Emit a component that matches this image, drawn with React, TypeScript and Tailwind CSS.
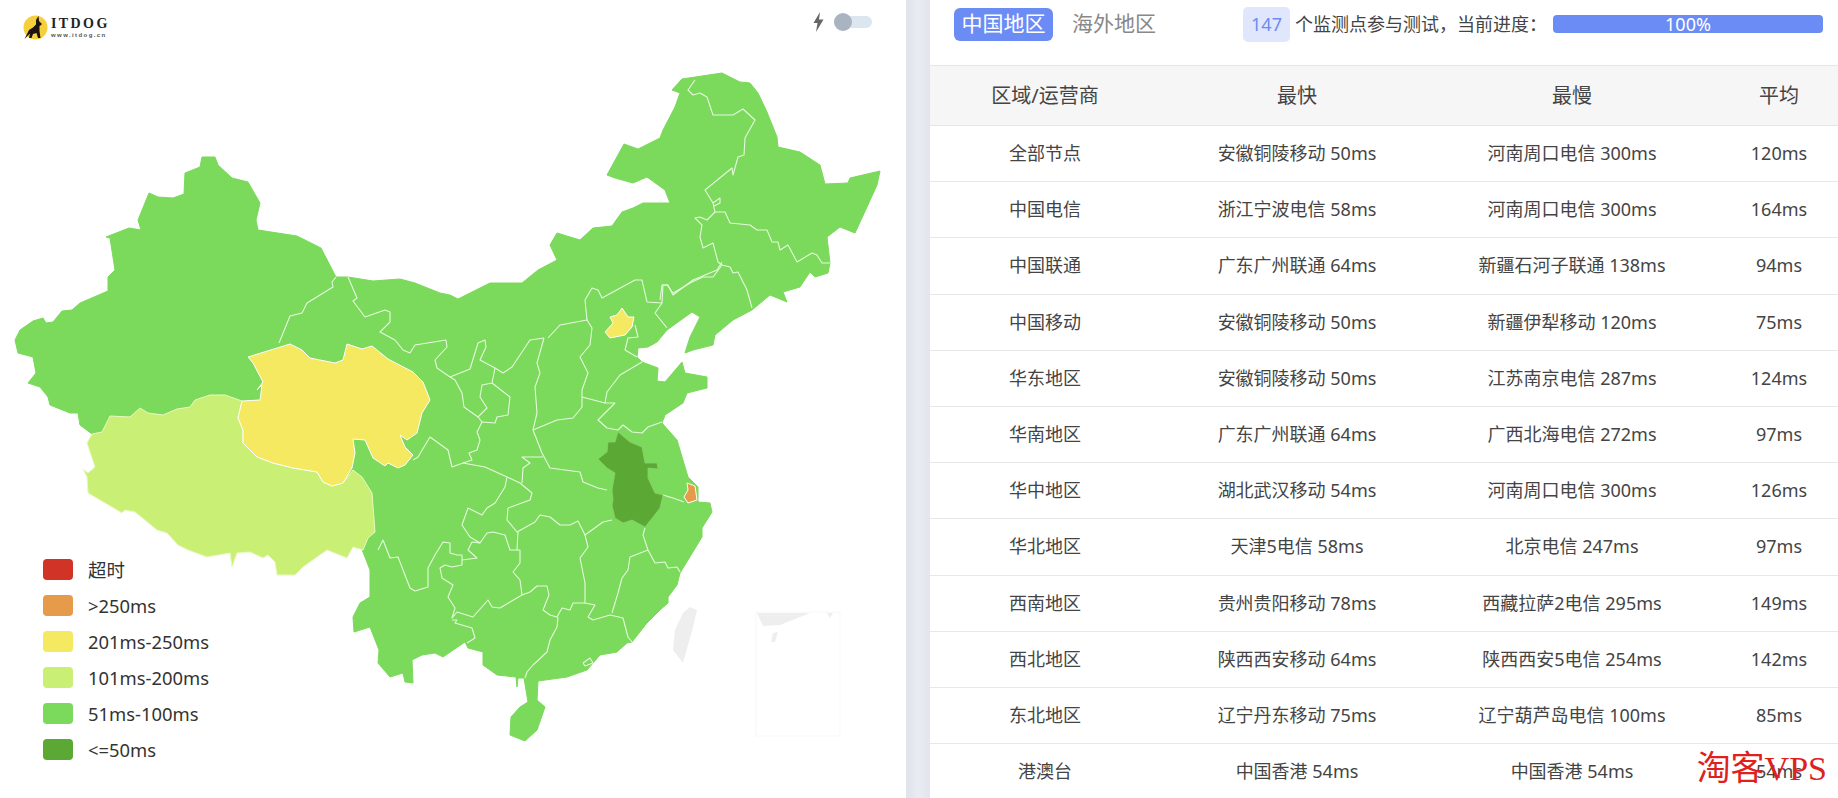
import React from 'react';

const GREEN = '#7bd95b';

// Map outlines, traced in page pixels
const OUTLINE =
  '15,340 20,330 33,321 43,318 46,323 53,322 62,311 72,310 80,303 108,291 108,277 115,270 110,238 106,237 129,228 141,230 138,220 149,193 158,197 173,198 184,194 185,173 200,167 202,157 215,157 218,165 232,178 248,182 260,203 256,220 258,230 297,236 321,248 336,277 348,277 373,281 400,279 415,283 440,293 450,295 458,299 490,283 522,283 538,270 557,260 550,245 557,233 580,240 593,228 612,226 622,212 633,208 643,203 670,203 665,190 647,177 633,183 615,178 607,175 624,144 638,149 660,138 663,130 675,107 680,93 672,90 682,79 722,73 740,82 750,83 758,93 767,112 777,137 778,147 800,152 820,165 825,184 848,183 850,178 880,171 877,185 867,207 855,233 840,227 827,237 830,263 828,273 815,277 810,272 800,287 783,292 787,302 770,295 752,310 733,320 715,335 713,345 693,350 685,353 690,337 700,317 692,312 667,330 657,342 648,347 638,348 637,357 642,362 658,368 657,381 665,382 682,362 685,373 707,377 707,388 687,393 683,403 665,415 662,423 677,440 688,477 698,487 698,502 710,503 712,512 702,528 702,537 688,560 680,573 677,585 668,597 668,603 660,610 647,623 632,642 627,643 617,652 600,655 587,670 567,677 538,681 537,700 545,707 537,730 525,741 510,735 511,717 520,707 528,702 524,678 518,678 517,687 516,677 497,675 483,665 483,652 468,648 465,642 443,657 435,653 422,655 412,660 413,683 405,682 403,673 390,677 378,663 379,650 370,627 354,632 353,617 360,603 370,597 370,570 363,552 340,500 300,450 200,420 92,434 80,425 78,413 70,413 50,405 48,397 40,387 28,383 36,373 33,357 18,353';

const TIBET =
  '92,434 102,432 110,416 130,417 140,408 148,413 163,415 177,409 190,407 195,400 210,395 225,395 242,401 238,418 243,430 243,443 257,457 273,463 293,468 317,472 323,482 332,486 343,483 353,470 362,477 372,493 375,532 368,538 363,550 353,547 347,558 327,550 303,567 295,575 277,575 275,562 268,555 263,558 250,552 237,553 232,567 230,553 207,557 188,550 178,545 167,533 157,530 135,512 125,510 122,513 88,493 87,477 83,469 88,473 95,467 87,443';

const QINGHAI =
  '248,357 290,344 302,350 310,358 335,363 343,360 347,344 362,349 372,346 388,359 413,372 423,382 430,400 422,413 417,433 407,440 400,435 405,447 413,455 405,465 398,468 388,463 385,466 373,458 365,440 353,439 355,453 352,468 343,483 332,486 323,482 317,472 293,468 273,463 257,457 243,443 243,430 238,418 242,401 260,400 262,385 257,390 263,382 253,363';

const ANHUI =
  '618,432 630,442 642,447 645,463 657,463 658,469 648,468 648,478 655,493 663,495 660,508 653,517 645,527 632,520 623,523 615,518 612,505 613,500 612,490 615,473 607,468 598,459 607,452 608,442 615,442';

const SHANGHAI = '687,483 695,486 697,500 688,503 684,497 688,490';
const BEIJING = '622,308 628,317 634,317 632,327 625,335 610,338 605,332 613,323 610,317 617,315';

// Province borders
const BORDERS = [
  '336,277 332,282 333,287 320,295 307,303 302,313 290,316 279,343',
  '348,277 357,298 353,301 365,317 385,310 390,312 390,322 380,332 395,340 403,350 410,353 415,345 446,340 447,347 435,360 437,368 450,377 470,369 478,343 485,340 486,347 480,360 495,368 503,373 512,367 530,340 544,338',
  '450,377 455,380 462,393 464,407 478,417 482,422 477,432 480,440 477,450 469,453 472,460 463,463 452,467 448,450 430,437 418,457 413,460',
  '495,368 492,383 482,385 480,397 487,408 478,417',
  '492,383 510,397 508,415 497,417 495,423 482,422',
  '544,338 537,363 540,373 535,387 537,413 533,430 557,420 573,418 582,407 582,390 588,373 580,357 590,345 592,328 587,320 560,325 548,338',
  '587,320 585,300 592,288 598,290 602,298 635,280 642,280 647,302 662,303 655,313 667,328',
  '662,303 663,285 668,285 673,295 693,280 717,270 722,262',
  '722,265 713,277 703,277 692,282 673,293 667,285 662,285 660,300',
  '722,265 718,262 713,243 703,248 700,237 702,225 695,218 700,217 707,220 715,212 713,203 705,190 732,168 733,175 738,157 744,155 745,138 755,120 743,109 733,115 713,115 707,97 700,93 693,95 688,90 695,80',
  '713,203 720,198 720,203 714,206',
  '715,212 725,212 730,223 750,225 757,230 767,230 772,242 778,242 780,250 788,245 797,262 812,253 817,255 822,263 830,263',
  '722,265 730,267 733,273 738,272 747,290 752,308',
  '635,325 638,337 628,338 625,350 637,357',
  '642,362 620,375 607,392 605,403 615,403 598,420 607,428 618,430 623,425 632,432 642,433 648,427 662,422',
  '582,397 605,403',
  '533,430 542,453 550,468 580,472 583,482 598,488 607,490',
  '543,457 522,457 530,463 523,468 522,483',
  '463,463 485,467 507,477 520,483 532,493 530,500 508,508 507,520 517,532 535,522 540,515 550,517 560,525 570,525 578,521 585,535 603,522 612,520',
  '507,477 505,487 495,503 487,508 482,515 468,508 462,525 470,537 480,543 487,533 493,532 505,535 510,550 517,550 518,532',
  '517,550 520,550 520,563 513,572 520,580 522,595 510,602 500,608 492,607 488,600 473,617 457,612 452,618 455,608 448,597 453,585 442,578 440,568 445,565 452,567 462,565 462,555 457,555 450,553 450,543 443,542 435,555 428,568 428,587 415,591 410,588 398,557 390,558 383,540 378,550',
  '462,560 477,558 468,550 472,542 480,543',
  '585,535 588,547 580,558 585,583 585,603 595,605 588,617 593,620 610,615 623,618 628,637 632,642',
  '645,528 643,535 648,550 630,557 628,570 622,578 618,593 612,613',
  '648,550 655,563 665,562 668,568 677,567 680,572',
  '585,603 573,603 570,610 562,608 557,617 550,615 543,610 549,595 547,586 537,586 530,592 522,595',
  '558,617 557,627 550,640 547,652 533,665 527,672 525,678',
  '452,620 457,620 455,623 472,628 475,638 467,643',
  '583,663 590,658 593,663 585,666 583,663',
  '663,495 673,498 684,502',
];

const LEGEND = [
  { label: '超时', color: 'bg-[#d13426]' },
  { label: '>250ms', color: 'bg-[#e69b4a]' },
  { label: '201ms-250ms', color: 'bg-[#f4e961]' },
  { label: '101ms-200ms', color: 'bg-[#c9f075]' },
  { label: '51ms-100ms', color: 'bg-[#7bd95b]' },
  { label: '<=50ms', color: 'bg-[#5ca834]' },
];

const ROWS = [
  ['全部节点', '安徽铜陵移动 50ms', '河南周口电信 300ms', '120ms'],
  ['中国电信', '浙江宁波电信 58ms', '河南周口电信 300ms', '164ms'],
  ['中国联通', '广东广州联通 64ms', '新疆石河子联通 138ms', '94ms'],
  ['中国移动', '安徽铜陵移动 50ms', '新疆伊犁移动 120ms', '75ms'],
  ['华东地区', '安徽铜陵移动 50ms', '江苏南京电信 287ms', '124ms'],
  ['华南地区', '广东广州联通 64ms', '广西北海电信 272ms', '97ms'],
  ['华中地区', '湖北武汉移动 54ms', '河南周口电信 300ms', '126ms'],
  ['华北地区', '天津5电信 58ms', '北京电信 247ms', '97ms'],
  ['西南地区', '贵州贵阳移动 78ms', '西藏拉萨2电信 295ms', '149ms'],
  ['西北地区', '陕西西安移动 64ms', '陕西西安5电信 254ms', '142ms'],
  ['东北地区', '辽宁丹东移动 75ms', '辽宁葫芦岛电信 100ms', '85ms'],
  ['港澳台', '中国香港 54ms', '中国香港 54ms', '54ms'],
];

const ChinaMap = () => (
  <svg className="absolute left-0 top-0" width="906" height="798" viewBox="0 0 906 798">
    <g strokeLinejoin="round">
      <polygon points={OUTLINE} fill={GREEN} stroke={GREEN} strokeWidth="1" />
      <polygon points={TIBET} fill="#c9f075" stroke="#eaf8c4" strokeWidth="1" />
      <polygon points={QINGHAI} fill="#f4e961" stroke="#fff" strokeWidth="1" />
      {BORDERS.map((b, i) => (
        <polyline key={i} points={b} fill="none" stroke="#e6f9de" strokeWidth="1.1" />
      ))}
      <polygon points={ANHUI} fill="#5ca834" stroke="#8ccf6c" strokeWidth="0.8" />
      <polygon points={SHANGHAI} fill="#e69b4a" stroke="#fff" strokeWidth="1" />
      <polygon points={BEIJING} fill="#f4e961" stroke="#fff" strokeWidth="1" />
    </g>
    {/* Taiwan and the South China Sea inset */}
    <polygon points="690,607 697,610 693,627 683,663 673,650 675,630 683,613" fill="#eeeeee" />
    <rect x="756" y="612" width="84" height="124" fill="none" stroke="#f7f7f7" />
    <polygon points="757,613 810,613 780,625 763,626" fill="#eeeeee" />
    <polygon points="827,613 833,613 830,618" fill="#eeeeee" />
    <polygon points="773,633 778,632 775,642 771,642" fill="#eeeeee" />
  </svg>
);

const Logo = () => (
  <div className="flex items-center gap-[3px]">
    <svg width="25" height="25" viewBox="0 0 25 25">
      <circle cx="12.5" cy="12.5" r="12" fill="#f5cf3c" />
      <path d="M1.5 24 L6 15 L10 12.5 L13 9.5 L13 5 L15.5 1 L16 6 L19 9 L17.5 10.5 L16.5 11 L16.5 16 L17.5 23 L15 23 L13.5 18 L10 19 L8.5 23 L6 23 L7 18.5 Z" fill="#1c1410" />
    </svg>
    <div className="flex flex-col font-['Liberation_Serif',serif] text-[#222]">
      <span className="text-[14px] leading-[14px] font-bold tracking-[2.4px]">ITDOG</span>
      <span className="text-[6px] leading-[8px] tracking-[1.4px] font-['Liberation_Sans',sans-serif] font-bold text-[#555]">www.itdog.cn</span>
    </div>
  </div>
);

const Toggle = () => (
  <div className="flex items-center gap-[10px]">
    <svg width="11" height="20" viewBox="0 0 10 20">
      <polygon points="6.5,0 0,11 4,11 2.5,20 10,7.5 5.5,7.5" fill="#666" />
    </svg>
    <div className="relative w-[38px] h-[12px] rounded-full bg-[#dbe6ef]">
      <div className="absolute left-0 top-[-3px] w-[18px] h-[18px] rounded-full bg-[#a9b4c0]" />
    </div>
  </div>
);

const App = () => {
  return (
    <div className="flex w-[1838px] h-[798px] overflow-hidden bg-white text-[#444] font-['Noto_Sans','Noto_Sans_CJK_SC',sans-serif]">
      {/* Map panel */}
      <div className="relative w-[906px] h-full">
        <ChinaMap />
        <div className="relative flex justify-between items-start pl-[23px] pr-[34px] pt-[12px]">
          <div className="pt-[3px]"><Logo /></div>
          <Toggle />
        </div>
        <div className="absolute left-[43px] top-[559px] flex flex-col gap-[15px]">
          {LEGEND.map((l) => (
            <div key={l.label} className="flex items-center gap-[15px] h-[21px]">
              <span className={'w-[30px] h-[21px] rounded-[4px] ' + l.color} />
              <span className="text-[18.4px] text-[#333]">{l.label}</span>
            </div>
          ))}
        </div>
      </div>

      <div className="w-[24px] h-full bg-linear-to-r from-[#dfe3ea] via-[#e9ecf1] to-[#e2e6ec]" />

      {/* Result panel */}
      <div className="relative flex-1 flex flex-col min-w-0">
        <div className="flex items-center shrink-0 h-[65px] pb-[17px] pl-[24px]">
          <span className="w-[99px] h-[33px] flex items-center justify-center rounded-[6px] bg-[#6c8cf5] text-white text-[21px]">中国地区</span>
          <span className="ml-[19px] text-[21px] text-[#888]">海外地区</span>
          <span className="ml-[87px] w-[47px] h-[35px] flex items-center justify-center rounded-[5px] bg-[#e0e6fb] text-[#6c8cf5] text-[18px]">147</span>
          <span className="ml-[5px] text-[18px] whitespace-nowrap">个监测点参与测试，当前进度：</span>
          <div className="ml-[6px] w-[270px] h-[18px] rounded-[4px] bg-[#6c8cf5] flex items-center justify-center text-white text-[18px] leading-none">100%</div>
        </div>
        <div className="grid grid-cols-[230px_274px_276px_128px] items-center shrink-0 h-[61px] bg-[#f6f6f6] border-y border-[#e6e6e6] text-[20px] text-center">
          <span>区域/运营商</span>
          <span>最快</span>
          <span>最慢</span>
          <span className="pl-[10px]">平均</span>
        </div>
        {ROWS.map((r) => (
          <div key={r[0]} className="grid grid-cols-[230px_274px_276px_128px] items-center shrink-0 h-[56.2px] border-b border-[#e8e8e8] text-[18px] text-center whitespace-nowrap">
            <span>{r[0]}</span>
            <span>{r[1]}</span>
            <span>{r[2]}</span>
            <span className="pl-[10px]">{r[3]}</span>
          </div>
        ))}
        <span className="absolute right-[11px] bottom-[10px] font-['Liberation_Serif','Noto_Sans_CJK_SC',serif] text-[34px] leading-[38px] text-[#e0201c]">淘客VPS</span>
      </div>
    </div>
  );
};

export default App;
